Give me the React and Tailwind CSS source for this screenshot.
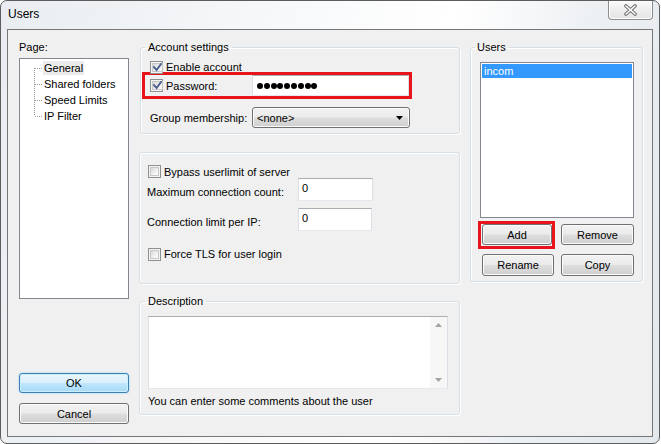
import React from "react";

function Check({ checked }) {
  return (
    <span className="flex h-[13px] w-[13px] shrink-0 border border-[#8e8f8f] bg-[#f4f4f4] p-[1px]">
      <span className="flex flex-1 items-center justify-center border border-[#c7c7c7] bg-[linear-gradient(135deg,#d8d8d8_0%,#f2f2f2_60%,#fdfdfd_100%)]">
        {checked && (
          <svg width="9" height="9" viewBox="0 0 9 9" className="shrink-0">
            <path d="M1 4.2 L3.6 7 L8 1" fill="none" stroke="#4b5f8e" strokeWidth="1.9" strokeLinecap="square" />
          </svg>
        )}
      </span>
    </span>
  );
}

function Btn({ children, className = "" }) {
  return (
    <div
      className={
        "flex items-center justify-center rounded-[3px] border border-[#707070] bg-[linear-gradient(to_bottom,#f2f2f2_0%,#ebebeb_48%,#dddddd_52%,#cfcfcf_100%)] shadow-[inset_0_0_0_1px_#fbfbfb] " +
        className
      }
    >
      {children}
    </div>
  );
}

function Field({ children, className = "" }) {
  return (
    <div
      className={
        "border border-[#abadb3] border-l-[#dbdfe6] border-r-[#dbdfe6] border-b-[#e3e9ef] bg-white " +
        className
      }
    >
      {children}
    </div>
  );
}

const groupCls =
  "rounded-[3px] border border-[#d5dfe5] px-0 shadow-[inset_1px_1px_0_#ffffff,1px_1px_0_#ffffff]";

export default function App() {
  return (
    <div className="h-[444px] w-[661px] overflow-hidden bg-white font-['Liberation_Sans',Arial,sans-serif] text-[11px] leading-[14px] text-black">
      <div className="flex h-[444px] w-[660px] flex-col rounded-[7px] border border-[#5c5c5c] bg-[linear-gradient(100deg,#e9edf1_0%,#f4f6f8_30%,#ffffff_62%,#eef1f4_80%,#e3e8ec_100%)] px-[6px] pb-[6px]">
        {/* title bar */}
        <div className="flex h-[28px] items-start">
          <span className="ml-[1px] mt-[6px] text-[12px] leading-[15px] text-black">Users</span>
          <div className="ml-auto flex h-[19px] w-[45px] items-center justify-center rounded-b-[4px] border border-t-0 border-[#8d8d8d] bg-[linear-gradient(to_bottom,#fbfbfb_0%,#eeeeee_50%,#e4e4e4_100%)] shadow-[inset_0_0_0_1px_#ffffff]">
            <svg width="15" height="12" viewBox="0 0 15 12">
              <path d="M3 2 L12 10 M12 2 L3 10" stroke="#6f6f6f" strokeWidth="3.6" strokeLinecap="round" />
              <path d="M3 2 L12 10 M12 2 L3 10" stroke="#ffffff" strokeWidth="1.6" strokeLinecap="round" />
            </svg>
          </div>
        </div>

        {/* client area */}
        <div className="flex flex-1 border border-[#767676] bg-[#f0f0f0] pl-[11px]">
          {/* left column */}
          <div className="flex w-[110px] flex-col">
            <div className="mt-[10px] h-[14px]">Page:</div>
            <div className="mt-[4px] h-[241px] border border-[#828790] bg-white pt-[1px]">
              <div className="flex pl-[10px]">
                <svg width="13" height="64" viewBox="0 0 13 64" className="shrink-0">
                  <g stroke="#9a9a9a" strokeWidth="1" strokeDasharray="1 1" fill="none">
                    <path d="M4.5 8 V56" />
                    <path d="M5 8.5 H13 M5 24.5 H13 M5 40.5 H13 M5 56.5 H13" />
                  </g>
                </svg>
                <div className="flex flex-col">
                  <div className="flex h-[16px] items-center">
                    <span className="bg-[#ebebeb] px-[1px] leading-[14px]">General</span>
                  </div>
                  <div className="flex h-[16px] items-center px-[1px]">Shared folders</div>
                  <div className="flex h-[16px] items-center px-[1px]">Speed Limits</div>
                  <div className="flex h-[16px] items-center px-[1px]">IP Filter</div>
                </div>
              </div>
            </div>
            <div className="mt-[74px] flex h-[20px] items-center justify-center rounded-[3px] border border-[#3c7fb1] bg-[linear-gradient(to_bottom,#eaf6fd_0%,#d9f0fc_48%,#bee6fd_52%,#a7d9f5_100%)] shadow-[inset_0_0_0_1px_#cdeeff,0_0_2px_#8fd0f5]">
              OK
            </div>
            <Btn className="mt-[10px] h-[21px]">Cancel</Btn>
          </div>

          {/* middle column */}
          <div className="ml-[10px] flex w-[321px] flex-col">
            <fieldset className={groupCls + " ml-[1px] mt-[10px] pb-[5px]"}>
              <legend className="ml-[4px] px-[3px] leading-[14px]">Account settings</legend>
              <div className="mt-[6px] flex h-[14px] items-center gap-[3px] pl-[9px]">
                <Check checked />
                <span>Enable account</span>
              </div>
              <div className="-mt-[2px] ml-[1px] flex h-[27px] w-[270px] items-stretch border-[3px] border-[#e8141c] pl-[5px]">
                <div className="flex items-center gap-[3px]">
                  <Check checked />
                  <span className="w-[86px]">Password:</span>
                </div>
                <Field className="flex flex-1 items-center gap-[0.8px] pl-[4px] pt-[1px]">
                  {Array.from({ length: 9 }).map((_, i) => (
                    <span key={i} className="h-[6px] w-[6px] rounded-full bg-black" />
                  ))}
                </Field>
              </div>
              <div className="mt-[8px] flex h-[21px] items-center pl-[9px]">
                <span className="w-[102px]">Group membership:</span>
                <div className="flex h-[21px] w-[158px] items-center rounded-[3px] border border-[#707070] bg-[linear-gradient(to_bottom,#f2f2f2_0%,#ebebeb_48%,#dddddd_52%,#cfcfcf_100%)] pl-[4px] pr-[6px] shadow-[inset_0_0_0_1px_#fbfbfb]">
                  <span className="flex-1">&lt;none&gt;</span>
                  <svg width="7" height="4" viewBox="0 0 7 4">
                    <path d="M0 0 H7 L3.5 4 Z" fill="#000" />
                  </svg>
                </div>
              </div>
            </fieldset>

            <div className={groupCls + " mt-[18px] pb-[22px] pl-[7px] pt-[12px]"}>
              <div className="ml-[1px] flex h-[13px] items-center gap-[3px]">
                <Check />
                <span>Bypass userlimit of server</span>
              </div>
              <div className="flex">
                <span className="w-[151px] pt-[7px]">Maximum connection count:</span>
                <Field className="h-[23px] w-[75px] pl-[3px] pt-[2px]">0</Field>
              </div>
              <div className="mt-[7px] flex">
                <span className="w-[151px] pt-[7px]">Connection limit per IP:</span>
                <Field className="h-[23px] w-[74px] pl-[3px] pt-[2px]">0</Field>
              </div>
              <div className="ml-[1px] mt-[16px] flex h-[14px] items-center gap-[3px]">
                <Check />
                <span>Force TLS for user login</span>
              </div>
            </div>

            <fieldset className={groupCls + " mt-[10px] pb-[6px]"}>
              <legend className="ml-[5px] px-[3px] leading-[14px]">Description</legend>
              <div className="ml-[8px] mt-[8px] flex h-[73px] w-[300px] border border-[#abadb3] border-b-[#e3e9ef] border-l-[#dbdfe6] border-r-[#dbdfe6] bg-white">
                <div className="flex-1" />
                <div className="flex w-[17px] flex-col items-center justify-between bg-[#f7f7f7] py-[6px]">
                  <svg width="7" height="4" viewBox="0 0 7 4">
                    <path d="M0 4 H7 L3.5 0 Z" fill="#a3a3a3" />
                  </svg>
                  <svg width="7" height="4" viewBox="0 0 7 4">
                    <path d="M0 0 H7 L3.5 4 Z" fill="#a3a3a3" />
                  </svg>
                </div>
              </div>
              <div className="ml-[8px] mt-[5px] h-[14px]">You can enter some comments about the user</div>
            </fieldset>
          </div>

          {/* right column */}
          <div className="ml-[10px] flex w-[173px] flex-col">
            <fieldset className={groupCls + " mt-[10px] pb-[5px]"}>
              <legend className="ml-[3px] px-[3px] leading-[14px]">Users</legend>
              <div className="ml-[9px] mt-[8px] h-[156px] w-[154px] border border-[#828790] bg-white p-[1px]">
                <div className="flex h-[14px] items-center bg-[#3399ff] pl-[2px] text-white">incom</div>
              </div>
              <div className="mt-[3px] flex items-start">
                <div className="ml-[7px] flex h-[28px] w-[77px] border-[3px] border-[#e8141c] p-[0px]">
                  <Btn className="ml-[1px] h-[21px] flex-1">Add</Btn>
                </div>
                <Btn className="ml-[6px] mt-[3px] h-[21px] w-[73px]">Remove</Btn>
              </div>
              <div className="mt-[5px] flex">
                <Btn className="ml-[11px] h-[22px] w-[72px]">Rename</Btn>
                <Btn className="ml-[7px] h-[22px] w-[73px]">Copy</Btn>
              </div>
            </fieldset>
          </div>
        </div>
      </div>
    </div>
  );
}
